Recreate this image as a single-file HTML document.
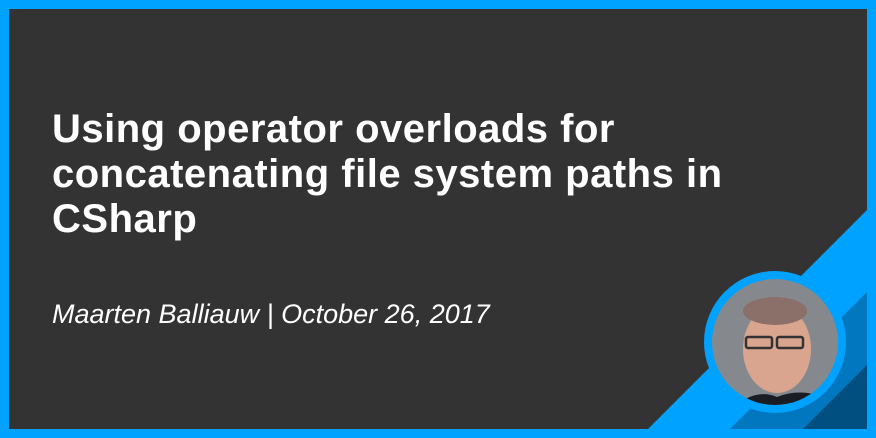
<!DOCTYPE html>
<html><head><meta charset="utf-8"><style>
html,body{margin:0;padding:0;width:876px;height:438px;overflow:hidden;background:#00a2ff}
#p{position:absolute;left:9px;top:9px;width:858px;height:420px;background:#333333;overflow:hidden}
h1{position:absolute;left:43px;top:98px;margin:0;font:bold 40px/45px "Liberation Sans",sans-serif;color:#fff;letter-spacing:0.5px}
.by{position:absolute;left:43px;top:290px;font:italic 27px "Liberation Sans",sans-serif;color:#fff;letter-spacing:0px}
</style></head><body>
<div id="p">
<svg width="858" height="420" style="position:absolute;left:0;top:0">
<polygon points="858,201 639,420 858,420" fill="#00a2ff"/>
<polygon points="858,283 721,420 858,420" fill="#0077bf"/>
<polygon points="858,356 794,420 858,420" fill="#004f80"/>
<circle cx="766" cy="333" r="71" fill="#00a2ff"/>
<defs><clipPath id="c"><circle cx="766" cy="333" r="63"/></clipPath></defs>
<g clip-path="url(#c)">
<rect x="700" y="268" width="140" height="140" fill="#85898e"/>
<ellipse cx="768" cy="340" rx="34" ry="44" fill="#d9a58f"/>
<ellipse cx="766" cy="302" rx="32" ry="14" fill="#8a7068"/>
<rect x="737" y="328" width="26" height="11" rx="2" fill="none" stroke="#333" stroke-width="2.5"/>
<rect x="768" y="328" width="26" height="11" rx="2" fill="none" stroke="#333" stroke-width="2.5"/>
<path d="M700 420 Q740 375 768 388 Q800 375 840 400 L840 420Z" fill="#1a1d24"/>
</g>
</svg>
<h1>Using operator overloads for<br>concatenating file system paths in<br>CSharp</h1>
<div class="by">Maarten Balliauw | October 26, 2017</div>
</div>
</body></html>
